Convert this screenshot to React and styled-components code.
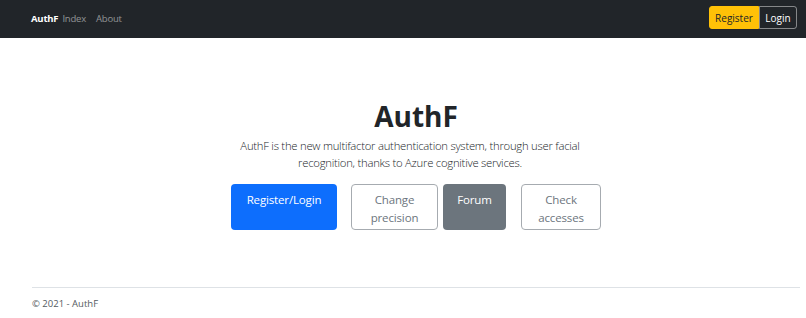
import React from "react";
import styled, { createGlobalStyle } from "styled-components";

const Global = createGlobalStyle`
  html, body { margin: 0; padding: 0; background: #fff; }
  body { font-family: "Open Sans", "Noto Sans", sans-serif; color: #212529; }
  * { box-sizing: border-box; }
`;

const Nav = styled.nav`
  height: 38px;
  background: #212529;
  display: flex;
  align-items: center;
  justify-content: space-between;
  padding: 0 9px 0 31px;
`;

const NavLeft = styled.div`
  display: flex;
  align-items: center;
  font-size: 9.5px;
  letter-spacing: -0.2px;
  margin-top: -1px;
`;

const Brand = styled.a`
  color: #fff;
  font-weight: 700;
  margin-right: 4px;
`;

const NavLink = styled.a`
  color: rgba(255, 255, 255, 0.5);
  margin-right: ${(p) => p.$mr || 0}px;
`;

const BtnGroup = styled.div`
  display: flex;
  height: 23px;
  margin-top: -3px;
`;

const NavBtn = styled.button`
  font-family: inherit;
  font-size: 10px;
  height: 23px;
  padding: 0;
  width: ${(p) => p.$w}px;
  background: ${(p) => (p.$yellow ? "#ffc107" : "transparent")};
  color: ${(p) => (p.$yellow ? "#212529" : "#fff")};
  border: 1px solid ${(p) => (p.$yellow ? "#ffc107" : "rgba(255,255,255,0.45)")};
  border-radius: ${(p) => (p.$yellow ? "3px 0 0 3px" : "0 3px 3px 0")};
`;

const Main = styled.main`
  margin: 0 6px 0 32px;
  display: flex;
  flex-direction: column;
  align-items: center;
  padding-top: 61px;
  height: 249px;
`;

const Title = styled.h1`
  margin: 0;
  font-size: 28px;
  font-weight: 700;
  line-height: 34px;
`;

const Lead = styled.p`
  margin: 4px 0 0;
  font-size: 11.3px;
  letter-spacing: -0.25px;
  font-weight: 300;
  line-height: 17px;
  text-align: center;
  color: #212529;
  transform: translateX(-6px);
`;

const Actions = styled.div`
  display: flex;
  margin-top: 13px;
`;

const ActionBtn = styled.button`
  font-family: inherit;
  font-size: 11.5px;
  letter-spacing: -0.15px;
  line-height: 18px;
  width: ${(p) => p.$w}px;
  height: 46px;
  margin-right: ${(p) => p.$mr || 0}px;
  padding: 6px 6px 0;
  display: flex;
  justify-content: center;
  align-items: flex-start;
  text-align: center;
  border-radius: 4px;
  border: 1px solid ${(p) => (p.$variant === "outline" ? "#a6abb0" : "transparent")};
  background: ${(p) =>
    p.$variant === "primary" ? "#0d6efd" : p.$variant === "secondary" ? "#6c757d" : "#fff"};
  color: ${(p) => (p.$variant === "outline" ? "#6c757d" : "#fff")};
`;

const Footer = styled.footer`
  margin: 0 6px 0 32px;
  border-top: 1px solid #dee2e6;
  height: 31px;
  display: flex;
  align-items: center;
  font-size: 9.5px;
  color: #555b61;
`;

export default function App() {
  return (
    <>
      <Global />
      <Nav>
        <NavLeft>
          <Brand>AuthF</Brand>
          <NavLink $mr={10}>Index</NavLink>
          <NavLink>About</NavLink>
        </NavLeft>
        <BtnGroup>
          <NavBtn $yellow $w={50}>Register</NavBtn>
          <NavBtn $w={38}>Login</NavBtn>
        </BtnGroup>
      </Nav>
      <Main>
        <Title>AuthF</Title>
        <Lead>
          AuthF is the new multifactor authentication system, through user facial
          <br />
          recognition, thanks to Azure cognitive services.
        </Lead>
        <Actions>
          <ActionBtn $variant="primary" $w={106} $mr={14}>Register/Login</ActionBtn>
          <ActionBtn $variant="outline" $w={87} $mr={5}>Change precision</ActionBtn>
          <ActionBtn $variant="secondary" $w={63} $mr={15}>Forum</ActionBtn>
          <ActionBtn $variant="outline" $w={80}>Check accesses</ActionBtn>
        </Actions>
      </Main>
      <Footer>© 2021 - AuthF</Footer>
    </>
  );
}
